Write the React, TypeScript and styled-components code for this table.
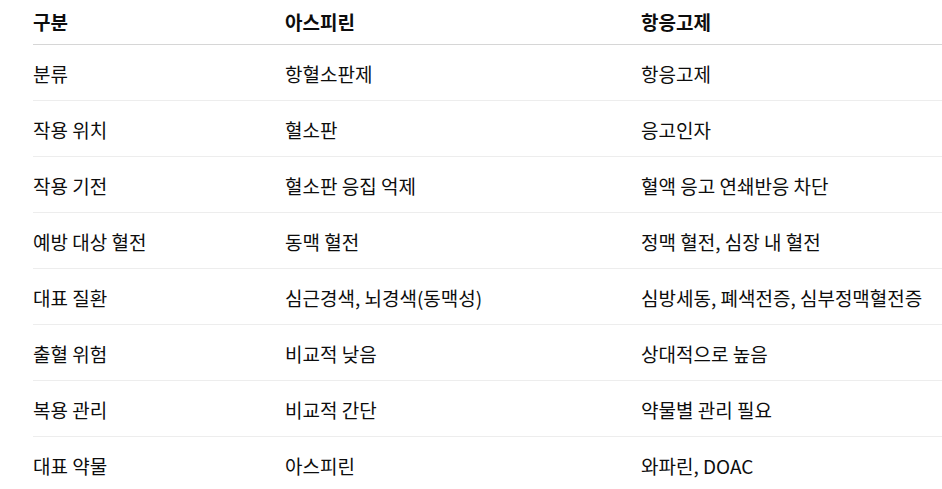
import React from 'react'
import styled, { createGlobalStyle } from 'styled-components'

const rows: [string, string, string][] = [
  ['분류', '항혈소판제', '항응고제'],
  ['작용 위치', '혈소판', '응고인자'],
  ['작용 기전', '혈소판 응집 억제', '혈액 응고 연쇄반응 차단'],
  ['예방 대상 혈전', '동맥 혈전', '정맥 혈전, 심장 내 혈전'],
  ['대표 질환', '심근경색, 뇌경색(동맥성)', '심방세동, 폐색전증, 심부정맥혈전증'],
  ['출혈 위험', '비교적 낮음', '상대적으로 높음'],
  ['복용 관리', '비교적 간단', '약물별 관리 필요'],
  ['대표 약물', '아스피린', '와파린, DOAC'],
]

export default function App() {
  return (
    <>
      <GlobalStyle />
      <Page>
        <Table>
          <HeadRow>
            <HeadCell>구분</HeadCell>
            <HeadCell>아스피린</HeadCell>
            <HeadCell>항응고제</HeadCell>
          </HeadRow>
          {rows.map((r, i) => (
            <Row key={r[0]} last={i === rows.length - 1}>
              <Cell>{r[0]}</Cell>
              <Cell>{r[1]}</Cell>
              <Cell>{r[2]}</Cell>
            </Row>
          ))}
        </Table>
      </Page>
    </>
  )
}

const GlobalStyle = createGlobalStyle`
  body {
    margin: 0;
    background: #fff;
    font-family: "Noto Sans CJK KR", "Noto Sans", sans-serif;
    color: #0d0d0d;
  }
`

const Page = styled.div`
  padding-left: 33px;
  overflow: hidden;
`

const Table = styled.div`
  display: flex;
  flex-direction: column;
`

const HeadRow = styled.div`
  display: grid;
  grid-template-columns: 252px 356px 1fr;
  height: 45px;
  align-items: center;
  border-bottom: 1px solid #d6d6d6;
  box-sizing: border-box;
`

const Row = styled.div<{ last?: boolean }>`
  display: grid;
  grid-template-columns: 252px 356px 1fr;
  height: 56px;
  align-items: center;
  border-bottom: ${(p) => (p.last ? 'none' : '1px solid #ededed')};
  box-sizing: border-box;
`

const HeadCell = styled.div`
  font-size: 19px;
  font-weight: 700;
  line-height: 24px;
  white-space: nowrap;
`

const Cell = styled.div`
  font-size: 19px;
  line-height: 24px;
  white-space: nowrap;
  padding-top: 2px;
`
